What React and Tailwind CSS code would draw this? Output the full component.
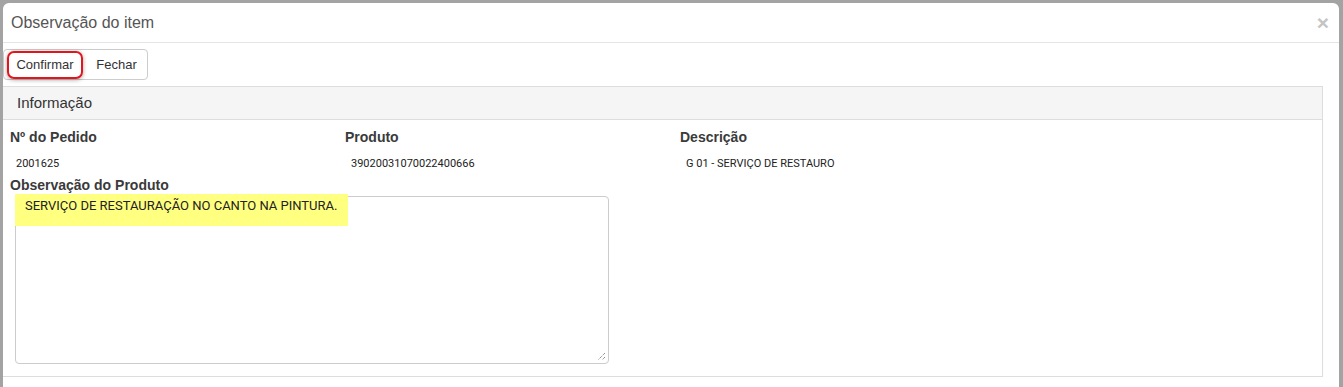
import React from 'react';

const sans = { fontFamily: '"Liberation Sans", Arial, sans-serif' };
const narrow = { fontFamily: 'Roboto, "Liberation Sans", sans-serif' };

const Field = ({ label, value }) => (
  <div className="w-[335px]">
    <div className="text-[14px] font-bold leading-[20px] text-[#3a3a3a]" style={sans}>
      {label}
    </div>
    <div className="mt-[8px] pl-[6px] text-[11px] leading-[18px] text-[#222]" style={narrow}>
      {value}
    </div>
  </div>
);

const ResizeGrip = () => (
  <svg className="absolute bottom-[2px] right-[2px] h-[9px] w-[9px]" viewBox="0 0 9 9">
    <path d="M8 1 L1 8 M8 5 L5 8" stroke="#666" strokeWidth="1" strokeDasharray="1 1" />
  </svg>
);

export default function App() {
  return (
    <div className="h-[387px] overflow-hidden bg-[#a3a3a3] pl-[3px] pr-[4px] pt-[3px]">
      <div className="h-full rounded-t-[6px] bg-white">
        {/* header */}
        <div className="flex h-[40px] items-center justify-between border-b border-[#e5e5e5] pl-[8px] pr-[10px]">
          <h4 className="text-[16px] text-[#555]" style={sans}>
            Observação do item
          </h4>
          <button className="text-[21px] font-bold leading-none text-[#c4c4c4]" style={sans}>
            ×
          </button>
        </div>

        {/* toolbar */}
        <div className="mt-[6px] flex">
          <div className="flex h-[31px] rounded-[4px] border border-[#cccccc]">
            <button className="flex items-center px-[3px]">
              <span
                className="flex h-[28px] w-[76px] items-center justify-center rounded-[7px] border-2 border-[#e3141c] text-[13px] text-[#333] shadow-[0_1px_4px_rgba(0,0,0,0.35)]"
                style={sans}
              >
                Confirmar
              </span>
            </button>
            <button className="w-[61px] text-[13px] text-[#333]" style={sans}>
              Fechar
            </button>
          </div>
        </div>

        {/* panel */}
        <div className="mr-[16px] mt-[6px] border-y border-r border-[#dddddd]">
          <div className="flex h-[33px] items-center border-b border-[#dddddd] bg-[#f5f5f5] pl-[14px]">
            <span className="text-[15px] text-[#333]" style={sans}>
              Informação
            </span>
          </div>
          <div className="pb-[12px] pl-[7px] pt-[7px]">
            <div className="flex">
              <Field label="Nº do Pedido" value="2001625" />
              <Field label="Produto" value="39020031070022400666" />
              <Field label="Descrição" value="G 01 - SERVIÇO DE RESTAURO" />
            </div>
            <div className="mt-[2px] text-[14px] font-bold leading-[20px] text-[#3a3a3a]" style={sans}>
              Observação do Produto
            </div>
            <div className="relative ml-[5px] mt-[1px] h-[168px] w-[594px] rounded-[4px] border border-[#cccccc]">
              <div
                className="-ml-px -mt-[3px] h-[32px] w-[333px] bg-[#ffff80] pl-[10px] pt-[4px] text-[13px] leading-[16px] text-[#222]"
                style={narrow}
              >
                SERVIÇO DE RESTAURAÇÃO NO CANTO NA PINTURA.
              </div>
              <ResizeGrip />
            </div>
          </div>
        </div>
      </div>
    </div>
  );
}
